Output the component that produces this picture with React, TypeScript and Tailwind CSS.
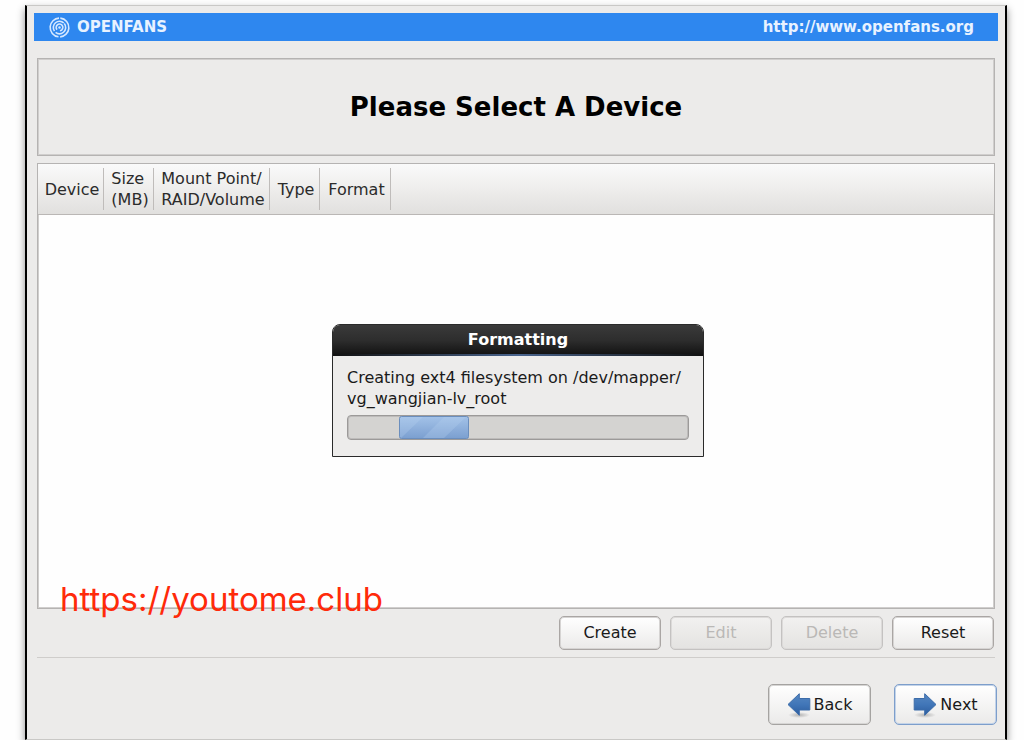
import React from 'react'
import clsx from 'clsx'

interface Column {
	lines: string[]
	width: string
}

const columns: Column[] = [
	{ lines: ['Device'], width: 'w-[66px]' },
	{ lines: ['Size', '(MB)'], width: 'w-[50px]' },
	{ lines: ['Mount Point/', 'RAID/Volume'], width: 'w-[116px]' },
	{ lines: ['Type'], width: 'w-[50px]' },
	{ lines: ['Format'], width: 'w-[71px]' },
]

const actions = [
	{ label: 'Create', disabled: false },
	{ label: 'Edit', disabled: true },
	{ label: 'Delete', disabled: true },
	{ label: 'Reset', disabled: false },
]

function Logo() {
	return (
		<svg
			viewBox="0 0 22 22"
			className="w-[21px] h-[21px]"
			fill="none"
			stroke="#d6e8ff"
			strokeWidth="1.7"
			aria-hidden="true"
		>
			<circle
				cx="11"
				cy="11"
				r="9.8"
				strokeDasharray="29 1.8"
				transform="rotate(-85 11 11)"
			/>
			<circle
				cx="11"
				cy="11"
				r="6.5"
				strokeDasharray="18.6 1.8"
				transform="rotate(-40 11 11)"
			/>
			<circle
				cx="11"
				cy="11"
				r="3.5"
				strokeDasharray="18 4"
				transform="rotate(140 11 11)"
			/>
			<circle cx="11" cy="11" r="1.3" fill="#d6e8ff" stroke="none" />
		</svg>
	)
}

function Arrow({ direction }: { direction: 'left' | 'right' }) {
	const id = `arrow-${direction}`
	return (
		<svg viewBox="0 0 24 26" className="w-6 h-[26px]" aria-hidden="true">
			<defs>
				<linearGradient id={id} x1="0" y1="0" x2="0" y2="1">
					<stop offset="0" stopColor="#5687c2" />
					<stop offset="0.5" stopColor="#4176b8" />
					<stop offset="1" stopColor="#2c5d9f" />
				</linearGradient>
				<radialGradient id={`${id}-shadow`}>
					<stop offset="0" stopColor="#000" stopOpacity="0.25" />
					<stop offset="1" stopColor="#000" stopOpacity="0" />
				</radialGradient>
			</defs>
			<ellipse cx="12" cy="23" rx="11" ry="3" fill={`url(#${id}-shadow)`} />
			<path
				d={
					direction === 'left'
						? 'M1 12.5L12.3 1.7V6.5H22.8V18H12.3V23.3Z'
						: 'M23 12.5L11.7 1.7V6.5H1.2V18H11.7V23.3Z'
				}
				fill={`url(#${id})`}
				stroke="#3c6ca9"
				strokeWidth="1"
				strokeLinejoin="round"
			/>
		</svg>
	)
}

function NavButton({
	direction,
	children,
}: {
	direction: 'left' | 'right'
	children: React.ReactNode
}) {
	return (
		<button
			type="button"
			className={clsx(
				'flex items-center justify-center gap-[3px] w-[103px] h-[41px] rounded-[5px] border bg-linear-to-b from-white to-[#ebeae9] text-[#1a1a1a]',
				direction === 'left'
					? 'border-[#a5a3a1] shadow-[inset_0_0_0_1px_#d6d5d4]'
					: 'border-[#7d9ecb] shadow-[inset_0_0_0_1px_#c3d3e8]'
			)}
		>
			<Arrow direction={direction} />
			<span>{children}</span>
		</button>
	)
}

function FormattingDialog() {
	return (
		<div
			role="dialog"
			aria-labelledby="dialog-title"
			className="w-[372px] rounded-t-lg border border-[#2a2a2a] bg-[#edeceb] overflow-hidden"
		>
			<div className="bg-linear-to-b from-[#3a3a3a] via-[#2d2d2d] to-[#111]">
				<h2
					id="dialog-title"
					className="h-[29px] leading-[30px] text-center font-bold text-white"
				>
					Formatting
				</h2>
				<div className="h-[2px] bg-linear-to-r from-[#111] via-[#4a658f] to-[#111]" />
			</div>
			<div className="px-[14px] pt-[11px] pb-4">
				<p className="leading-[21px] text-[#1a1a1a]">
					Creating ext4 filesystem on /dev/mapper/
					<br />
					vg_wangjian-lv_root
				</p>
				<div
					role="progressbar"
					aria-labelledby="dialog-title"
					className="mt-[6px] h-[25px] rounded border border-[#9c9a99] bg-[#d4d3d1] shadow-[inset_0_0_0_1px_#bdbbba]"
				>
					<svg
						viewBox="0 0 70 23"
						className="ml-[51px] w-[70px] h-[23px]"
						aria-hidden="true"
					>
						<defs>
							<linearGradient id="bar" x1="0" y1="0" x2="0" y2="1">
								<stop offset="0" stopColor="#a3c2e8" />
								<stop offset="1" stopColor="#7b9fd0" />
							</linearGradient>
						</defs>
						<rect x="0.5" y="0.5" width="69" height="22" rx="2" fill="url(#bar)" />
						<path
							d="M1 1H24L2 22H1ZM45 1H67L45 22H24Z"
							fill="#b5d0f0"
							fillOpacity="0.3"
						/>
						<rect
							x="0.5"
							y="0.5"
							width="69"
							height="22"
							rx="2"
							fill="none"
							stroke="#6b8ebd"
						/>
					</svg>
				</div>
			</div>
		</div>
	)
}

export default function App() {
	return (
		<div className="flex min-h-screen bg-[#fefefe] pl-[25px] pr-[17px] pt-[5px] font-['DejaVu_Sans',sans-serif] text-base overflow-hidden">
			<div className="flex flex-1 flex-col border-x-2 border-x-black border-y border-y-[#c9c8c6] bg-[#ecebea] shadow-[0_4px_8px_rgba(0,0,0,0.45)]">
				<header className="mx-[7px] mt-[7px] flex h-7 items-center justify-between bg-[#2e87ef] pl-[15px] pr-6 text-[15px] leading-5 font-bold text-[#e8f2ff]">
					<div className="flex items-center gap-[7px]">
						<Logo />
						<span>OPENFANS</span>
					</div>
					<a href="http://www.openfans.org">http://www.openfans.org</a>
				</header>

				<main className="relative flex flex-1 flex-col px-[10px] pt-[17px] pb-[14px]">
					<div className="flex h-[98px] items-center justify-center border border-[#b5b3b2] shadow-[inset_0_0_0_1px_#d0cecd]">
						<h1 className="text-[26px] font-bold text-black">
							Please Select A Device
						</h1>
					</div>

					<div className="relative mt-[7px] flex-1 border border-[#b5b3b2] bg-[#fefefe] shadow-[inset_0_0_0_1px_#d0cecd]">
						<table className="w-full table-fixed border-collapse">
							<thead>
								<tr className="border-b border-[#bab7b5] bg-linear-to-b from-[#fafafa] from-0% via-[#eeedec] via-50% to-[#e1e0de] text-[#2b2b2b]">
									{columns.map((col) => (
										<th
											key={col.lines[0]}
											scope="col"
											className={clsx('px-0 py-1 font-normal', col.width)}
										>
											<div className="flex h-[42px] items-center justify-center border-r border-[#bfbcba] pl-[3px] text-left leading-[21px]">
												<span className="whitespace-nowrap">
													{col.lines.map((line) => (
														<span key={line} className="block">
															{line}
														</span>
													))}
												</span>
											</div>
										</th>
									))}
									<td />
								</tr>
							</thead>
						</table>
						<a
							href="https://youtome.club"
							className="absolute -bottom-[11px] left-[22px] font-['Inter',sans-serif] text-[33px] leading-[40px] text-[#ff2a0a]"
						>
							https://youtome.club
						</a>
					</div>

					<div className="mr-px mt-[7px] flex justify-end gap-[9px]">
						{actions.map(({ label, disabled }) => (
							<button
								key={label}
								type="button"
								disabled={disabled}
								className={clsx(
									'h-[34px] w-[102px] rounded-[5px] border',
									disabled
										? 'border-[#c4c2c1] bg-linear-to-b from-[#f2f1f0] to-[#e4e3e1] text-[#bab8b6] shadow-[inset_0_0_0_1px_#dcdad9]'
										: 'border-[#aaa6a4] bg-linear-to-b from-white to-[#ebeae9] text-[#1a1a1a] shadow-[inset_0_0_0_1px_#d6d4d3]'
								)}
							>
								{label}
							</button>
						))}
					</div>

					<hr className="mt-[7px] border-t border-[#cfcdcb]" />

					<nav className="-mr-[2px] mt-[26px] flex justify-end gap-[23px]">
						<NavButton direction="left">Back</NavButton>
						<NavButton direction="right">Next</NavButton>
					</nav>

					<div className="absolute inset-0 flex items-center justify-center pl-1 pointer-events-none">
						<FormattingDialog />
					</div>
				</main>
			</div>
		</div>
	)
}
